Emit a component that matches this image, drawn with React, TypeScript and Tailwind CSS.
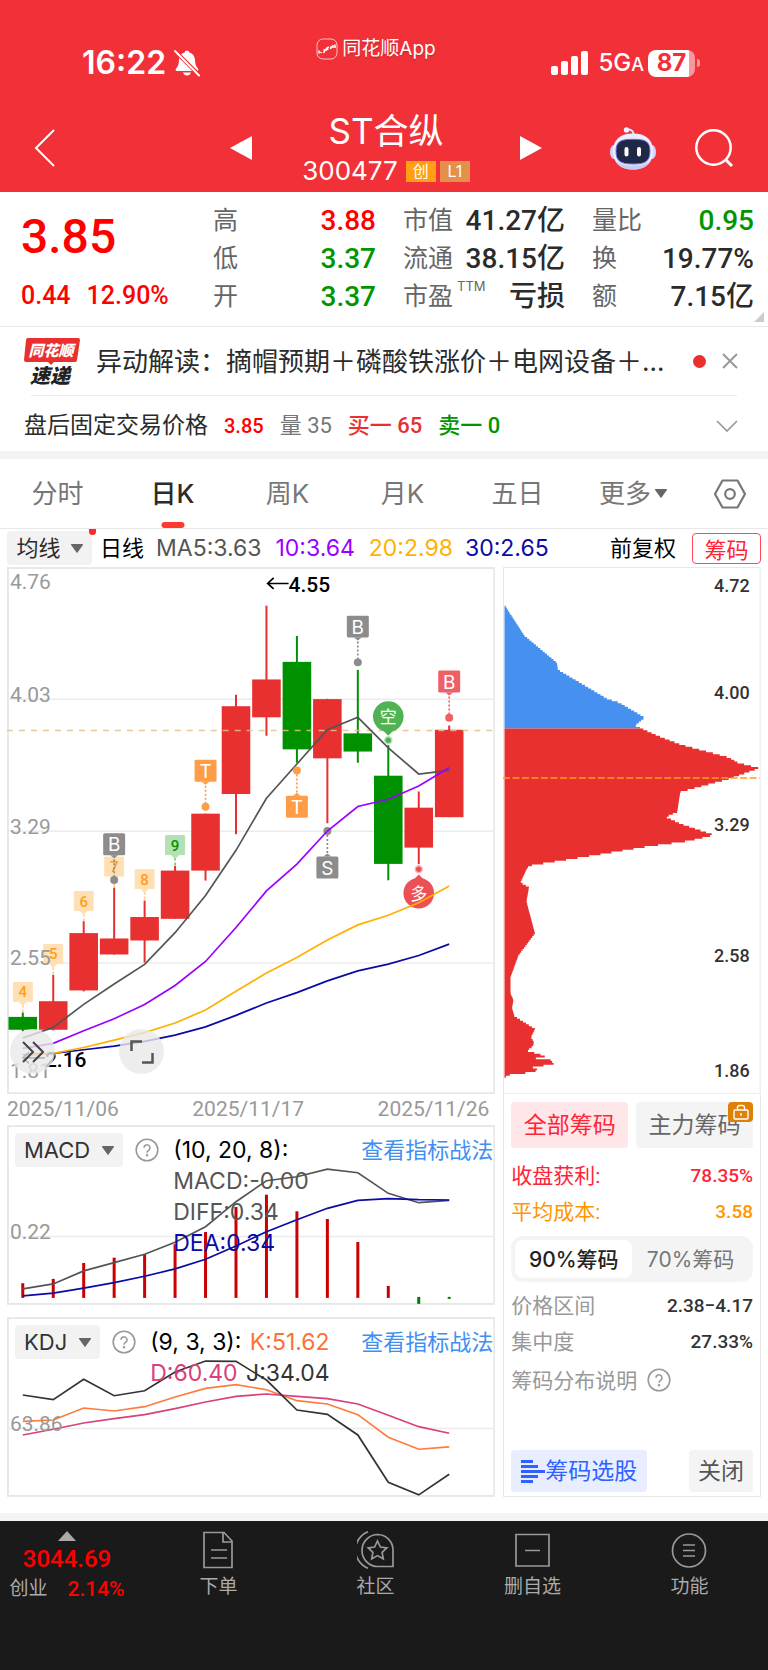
import { useState } from "react";

type Candle = { up: boolean; top: number; bottom: number; high: number; low: number };
type Point = [number, number];

const STEP = 30.5;
const cx = (i: number) => 15.8 + i * STEP;
const toLine = (ys: number[]) => ys.map((y, i) => `${cx(i)},${y}`).join(" ");

const candles: Candle[] = [
  { up: false, top: 450.5, bottom: 463.4, high: 446, low: 465 },
  { up: true, top: 434.8, bottom: 463.4, high: 408.4, low: 464 },
  { up: true, top: 366.6, bottom: 424, high: 354.4, low: 425 },
  { up: true, top: 372, bottom: 388, high: 321, low: 388 },
  { up: true, top: 350.5, bottom: 374, high: 334, low: 396 },
  { up: true, top: 304, bottom: 352.3, high: 299.4, low: 352.3 },
  { up: true, top: 247, bottom: 304, high: 247, low: 314 },
  { up: true, top: 139.4, bottom: 227.3, high: 128, low: 267.6 },
  { up: true, top: 112.6, bottom: 150.5, high: 38.7, low: 169 },
  { up: false, top: 95, bottom: 182.6, high: 69, low: 196 },
  { up: true, top: 132.3, bottom: 191.6, high: 132, low: 256.6 },
  { up: false, top: 166.6, bottom: 184.8, high: 103, low: 196 },
  { up: false, top: 209, bottom: 297.3, high: 178.4, low: 313.7 },
  { up: true, top: 241, bottom: 281, high: 224.8, low: 297.6 },
  { up: true, top: 163, bottom: 250.5, high: 158.7, low: 250.5 },
];

const ma5 = [471.6, 461, 438, 417.6, 398, 366.2, 329, 283.7, 231.6, 197.3, 163, 150.5, 181.2, 207.3, 203.7];
const ma10 = [482, 477, 464.4, 452.3, 438, 419, 395, 361, 324.4, 297.6, 264.4, 239.8, 232.6, 219.4, 201];
const ma20 = [489.4, 487, 481.2, 473.7, 466.2, 456.6, 443.7, 424.8, 406.6, 391, 373.4, 358.4, 348.7, 336.2, 319.4];
const ma30 = [488.4, 487, 483.4, 479.8, 475, 468.7, 460.5, 449, 436.6, 426.2, 414.4, 404.4, 397.6, 389, 377.6];

const diff = [164, 159, 146, 137.7, 129.3, 117.3, 101.7, 76.7, 55.7, 51.7, 44, 47.7, 68.3, 77.7, 75.3];
const dea = [171, 168.3, 163.3, 157.7, 151.3, 144, 134.3, 121, 106.7, 94.7, 83.3, 75.3, 73.7, 74.7, 75];
const macdTops = [158.3, 154, 138, 132.7, 129.3, 119.3, 107, 82, 69.7, 86.3, 94, 117, 161];

const kLine = [104.3, 103, 91, 94, 89.7, 80, 71.3, 67.7, 72.7, 83.7, 87, 97.7, 120.3, 132.3, 130];
const dLine = [118, 112.3, 106, 101.7, 97.7, 91.7, 85, 79.3, 77, 79.3, 81.7, 87, 98.3, 109.7, 116.3];
const jLine = [78, 82.7, 62.3, 78.7, 73.7, 55, 44, 44.3, 63, 93, 97.3, 118, 165.3, 178, 157.3];

const counts = [
  { i: 0, y: 416, n: "4" },
  { i: 1, y: 378, n: "5" },
  { i: 2, y: 325, n: "6" },
  { i: 3, y: 290.5, n: "7" },
  { i: 4, y: 303, n: "8" },
  { i: 5, y: 269, n: "9" },
];

const flags = [
  { i: 3, box: 266.6, dot: 313.4, t: "B", c: "#8c8c8c" },
  { i: 6, box: 193, dot: 240, t: "T", c: "#ff9c47" },
  { i: 9, box: 229, dot: 203.7, t: "T", c: "#ff9c47" },
  { i: 10, box: 290, dot: 264.4, t: "S", c: "#8c8c8c" },
  { i: 11, box: 48.7, dot: 95.5, t: "B", c: "#8c8c8c" },
  { i: 14, box: 103.7, dot: 151, t: "B", c: "#ef6066" },
];

// chip distribution outline: [width, price row]
const trapped: Point[] = [
  [1.5, 37], [21.5, 68], [54, 95], [55, 102], [105, 131.5], [116.5, 135], [142, 150], [132, 158], [140.5, 161.7],
];
const profit: Point[] = [
  [140.5, 161.7], [156, 168.6], [178, 177], [226.5, 190], [235, 195], [256.5, 200.6], [225, 211.7], [177.5, 224.4],
  [174.5, 244.4], [163, 249.5], [179, 256.8], [211.5, 267.4], [187, 273.3], [141.5, 279.5], [96.5, 287], [28, 298],
  [24.5, 300], [17.5, 315], [26, 320], [23.5, 334], [32, 366], [15.5, 388], [7.5, 410], [7.5, 426], [10.5, 433],
  [9, 440.6], [11.5, 449], [32, 461.7], [28, 470], [31, 475], [30, 479], [24, 483.4], [43, 489], [32, 491],
  [47, 492], [51, 497], [29, 500], [34.5, 501.6], [32, 504.7], [7, 507.5], [3, 509.5], [1.5, 512],
];

function steps(points: Point[]) {
  const first = points[0][1];
  const last = points[points.length - 1][1];
  let d = `M1.5 ${first}`;
  for (let y = first; y < last; y += 1.84) {
    const n = Math.max(1, points.findIndex((p) => p[1] > y));
    const [x0, y0] = points[n - 1];
    const [x1, y1] = points[n];
    const x = x0 + ((x1 - x0) * (y - y0)) / (y1 - y0);
    d += `H${x.toFixed(1)}V${Math.min(y + 1.84, last).toFixed(2)}`;
  }
  return d + "H1.5Z";
}

const quotes = [
  { label: "高", value: "3.88", tone: "text-[#ff0000]" },
  { label: "低", value: "3.37", tone: "text-[#009600]" },
  { label: "开", value: "3.37", tone: "text-[#009600]" },
];
const sizes = [
  { label: "市值", value: "41.27亿", tone: "text-[#2b2b2b]" },
  { label: "流通", value: "38.15亿", tone: "text-[#2b2b2b]" },
  { label: "市盈", sup: "TTM", value: "亏损", tone: "text-[#2b2b2b]" },
];
const ratios = [
  { label: "量比", value: "0.95", tone: "text-[#009600]" },
  { label: "换", value: "19.77%", tone: "text-[#2b2b2b]" },
  { label: "额", value: "7.15亿", tone: "text-[#2b2b2b]" },
];

const DIN = "font-['Roboto','Noto_Sans_CJK_SC',sans-serif]";

function Quotes({ items }: { items: { label: string; value: string; tone: string; sup?: string }[] }) {
  return (
    <dl className="flex flex-col">
      {items.map((q) => (
        <div key={q.label} className="flex h-[38px] items-center justify-between">
          <dt className="relative text-[25px] text-[#666]">
            {q.label}
            {q.sup ? <span className="absolute left-full top-0 ml-1 text-[13px] leading-4">{q.sup}</span> : null}
          </dt>
          <dd className={`${DIN} text-[28px] font-medium ${q.tone}`}>{q.value}</dd>
        </div>
      ))}
    </dl>
  );
}

function Caret({ className }: { className: string }) {
  return (
    <svg viewBox="0 0 12 9" className={className} fill="currentColor" aria-hidden="true">
      <path d="M.6 0h10.8a.6.6 0 0 1 .5 1L6.500 8.600a.6.6 0 0 1-1 0L.1 1A.6.6 0 0 1 .6 0z" />
    </svg>
  );
}

function Help() {
  return (
    <svg viewBox="0 0 24 24" className="size-6 shrink-0" fill="none" stroke="#999" strokeWidth="1.600" aria-hidden="true">
      <circle cx="12" cy="12" r="10.800" />
      <path d="M9 9.800a3 3 0 1 1 4.800 2.400c-1.200.8-1.800 1.300-1.800 2.600" />
      <circle cx="12" cy="17.300" r=".5" fill="#999" />
    </svg>
  );
}

function StatusBar() {
  return (
    <div className="grid h-24 grid-cols-3">
      <div className="flex items-center pl-[82px] pt-[30px]">
        <span className="text-[32px] font-semibold">16:22</span>
        <svg viewBox="0 0 26 28" className="ml-2 h-7 w-[26px]" aria-hidden="true">
          <path
            d="M13 1.500c1.300 0 2.200.8 2.400 1.900 3.600 1 5.400 3.900 5.600 7.700.2 4 .8 6.200 3 8.600.8 1 .3 2.300-1.100 2.300H3.100c-1.400 0-1.900-1.300-1.100-2.300 2.200-2.400 2.800-4.600 3-8.600.2-3.800 2-6.700 5.600-7.700.2-1.100 1.100-1.900 2.400-1.900zM9 23.500h8c-.5 2-2 3-4 3s-3.500-1-4-3z"
            fill="white"
          />
          <path d="M0 1l25 25" stroke="#f13038" strokeWidth="4" />
          <path d="M1 2l24 24.500" stroke="white" strokeWidth="2" strokeLinecap="round" />
        </svg>
      </div>
      <div className="flex items-center justify-center gap-1 pr-4 pt-0.5 text-[19px] text-shadow-sm">
        <svg viewBox="0 0 22 22" className="size-[22px]" fill="none" stroke="white" aria-hidden="true">
          <rect x="1" y="1" width="20" height="20" rx="6" strokeOpacity=".7" />
          <path d="M3 15.500v-3M4.500 15l1-1M7 14.500c2 0 2-3 .5-3M10 13v-2.500M12 12l-1-2 2-1M14.500 11l1-3M17 10V7M19 10V6.500" strokeWidth="1.600" />
        </svg>
        <span>同花顺App</span>
      </div>
      <div className="flex items-center justify-end pr-[68px] pt-[30px]">
        <svg viewBox="0 0 37 24" className="h-6 w-[37px]" fill="white" aria-hidden="true">
          <rect x="0" y="15" width="7" height="9" rx="2" />
          <rect x="10" y="10" width="7" height="14" rx="2" />
          <rect x="20" y="5" width="7" height="19" rx="2" />
          <rect x="30" y="0" width="7" height="24" rx="2" />
        </svg>
        <span className="ml-2.5 text-2xl font-medium">
          5G<span className="text-lg">A</span>
        </span>
        <span className="ml-1 flex h-[27px] w-[47px] items-center justify-center rounded-lg bg-linear-to-r from-white from-88% to-white/50 to-88% text-2xl font-bold text-[#f13038]">
          87
        </span>
        <span className="ml-0.5 h-2 w-[3px] rounded-r-full bg-white/50" />
      </div>
    </div>
  );
}

function TitleBar() {
  return (
    <div className="grid h-24 grid-cols-[200px_1fr_200px] items-center pt-2">
      <button aria-label="返回" className="ml-8 w-8">
        <svg viewBox="0 0 24 40" className="h-10 w-6" fill="none" stroke="white" strokeWidth="2">
          <path d="M22 2L4 20l18 18" />
        </svg>
      </button>
      <div className="flex items-center justify-between pl-7 pr-6">
        <button aria-label="上一只">
          <svg viewBox="0 0 24 24" className="size-6" fill="white">
            <path d="M24 0v24L2 12z" />
          </svg>
        </button>
        <div className="flex flex-col items-center">
          <h1 className="text-[35px] leading-11">ST合纵</h1>
          <div className="mt-0.5 flex items-center gap-1">
            <span className="mr-1 text-[26px] leading-8">300477</span>
            <span className="flex h-[21px] w-[30px] items-center justify-center bg-[#ff9f14] text-base">创</span>
            <span className="flex h-[21px] w-[30px] items-center justify-center bg-[#e4904a] text-base">L1</span>
          </div>
        </div>
        <button aria-label="下一只">
          <svg viewBox="0 0 24 24" className="size-6" fill="white">
            <path d="M0 0v24l22-12z" />
          </svg>
        </button>
      </div>
      <div className="flex items-center justify-between pl-[42px] pr-[34px]">
        <button aria-label="智能助手">
          <svg viewBox="0 0 46 43" className="h-[43px] w-[46px]">
            <path d="M23.500 8c.3-4-2-5.500-6.500-5.500" stroke="#e4e6fb" strokeWidth="2" fill="none" />
            <circle cx="16.500" cy="3" r="2.700" fill="#eef0ff" />
            <ellipse cx="4" cy="25" rx="4" ry="7" fill="#d3d6f8" />
            <ellipse cx="42" cy="25" rx="4" ry="7" fill="#d3d6f8" />
            <path d="M23 6.500c12.500 0 20 6 20 17.500 0 12-7.500 18.500-20 18.500S3 36 3 24C3 12.500 10.500 6.500 23 6.500z" fill="#eceefe" />
            <path d="M5 33c3.500 7 9 9.500 18 9.500S37.500 40 41 33c-5 4.500-10 5.500-18 5.500S10 37.500 5 33z" fill="#c9cdf4" />
            <path
              d="M23 12.300c12 0 17 1.700 17 12S35 37 23 37 6 34.500 6 24.300s5-12 17-12z"
              fill="#1f2846"
              stroke="#7468e6"
              strokeWidth="1"
            />
            <rect x="14.500" y="20" width="4" height="9.500" rx="2" fill="white" />
            <rect x="27" y="20" width="4" height="9.500" rx="2" fill="white" />
          </svg>
        </button>
        <button aria-label="搜索">
          <svg viewBox="0 0 40 40" className="size-10" fill="none" stroke="white" strokeWidth="2.500">
            <circle cx="19.500" cy="19.500" r="17.200" />
            <path d="M31.500 31.500l6.500 6.500" strokeWidth="3" />
          </svg>
        </button>
      </div>
    </div>
  );
}

function PriceChart() {
  return (
    <svg viewBox="0 0 489 528" className="block w-full font-['Roboto','Noto_Sans_CJK_SC',sans-serif]" role="img" aria-label="日K线图">
      <rect x="1" y="1" width="487" height="526" fill="white" stroke="#e8e8e8" strokeWidth="2" />
      {[132.5, 264.5, 396.5].map((y) => (
        <path key={y} d={`M1 ${y}H488`} stroke="#ececec" strokeWidth="1.500" />
      ))}
      {candles.map((c, i) => (
        <g key={i} fill={c.up ? "#e83030" : "#009100"}>
          <rect x={cx(i) - 1} y={c.high} width="2" height={c.low - c.high} />
          <rect x={cx(i) - 14.3} y={c.top} width="28.600" height={c.bottom - c.top} />
        </g>
      ))}
      <path d="M0 163.700H488" stroke="#e0c08c" strokeOpacity=".85" strokeWidth="1.500" strokeDasharray="6 6" />
      {counts.map(({ i, y, n }) => (
        <g key={n}>
          <path d={`M${cx(i)} ${y + 22}v8`} stroke={n === "9" ? "#5fbf62" : "#ffc880"} strokeWidth="1.500" strokeDasharray="3 2" />
          <path
            d={`M${cx(i) - 9.5} ${y}h19v19h-5.500l-4 4-4-4h-5.500z`}
            fill={n === "9" ? "#b3e0b4" : "#ffe0b5"}
            stroke={n === "9" ? "#b3e0b4" : "#ffe0b5"}
            strokeLinejoin="round"
          />
          <text x={cx(i)} y={y + 15} textAnchor="middle" fontSize="15" fontWeight="500" fill={n === "9" ? "#009600" : "#ff9c1a"}>
            {n}
          </text>
        </g>
      ))}
      <g fill="none" strokeWidth="1.700">
        <polyline points={toLine(ma30)} stroke="#0a0aa5" />
        <polyline points={toLine(ma5)} stroke="#555" />
      </g>
      {flags.map(({ i, box, dot, t, c }) => (
        <g key={`${i}${t}`} fill={c}>
          <path d={`M${cx(i)} ${Math.min(box + 22, dot)}V${Math.max(box, dot)}`} stroke={c} strokeWidth="1.700" strokeDasharray="2 2" />
          <rect x={cx(i) - 11} y={box} width="22" height="22" rx="1.500" />
          <path d={dot > box ? `M${cx(i) - 4} ${box + 22}h8l-4 3z` : `M${cx(i) - 4} ${box}h8l-4-3z`} />
          <circle cx={cx(i)} cy={dot} r="4" />
          <text x={cx(i)} y={box + 18} textAnchor="middle" fontSize="19" fill="white" className="font-['Inter',sans-serif]">
            {t}
          </text>
        </g>
      ))}
      <g fill="#4fb353">
        <circle cx={cx(12)} cy="149.800" r="15.300" />
        <path d={`M${cx(12) - 7} 162h14l-7 7z`} />
        <circle cx={cx(12)} cy="173.400" r="3.500" stroke="#b9e2ba" strokeWidth="1.500" />
        <text x={cx(12)} y="156" textAnchor="middle" fontSize="17" fill="white">空</text>
      </g>
      <g fill="#ec5055">
        <circle cx={cx(13)} cy="326.600" r="15.300" />
        <path d={`M${cx(13) - 7} 315h14l-7-7z`} />
        <circle cx={cx(13)} cy="302.600" r="3.500" stroke="#f8bcbe" strokeWidth="1.500" />
        <text x={cx(13)} y="333" textAnchor="middle" fontSize="17" fill="white">多</text>
      </g>
      <g fill="none" strokeWidth="1.700">
        <polyline points={toLine(ma10)} stroke="#9a00ff" />
        <polyline points={toLine(ma20)} stroke="#ffb000" />
      </g>
      <g fontSize="21" fill="#999">
        <text x="3" y="22">4.76</text>
        <text x="3" y="135">4.03</text>
        <text x="3" y="267">3.29</text>
        <text x="3" y="399">2.55</text>
        <text x="3" y="512">1.81</text>
      </g>
      <g stroke="black" strokeWidth="1.700" fill="none">
        <path d="M282 16.500H261M267 11l-6 5.500 6 5.500" />
        <path d="M38 491.500H16M22 486l-6 5.500 6 5.500" />
      </g>
      <g fontSize="21" fontWeight="500">
        <text x="282" y="25">4.55</text>
        <text x="38" y="501">2.16</text>
      </g>
    </svg>
  );
}

function ChipChart() {
  const labels: [string, number][] = [["4.72", 25], ["4.00", 132], ["3.29", 264], ["2.58", 396], ["1.86", 511]];
  return (
    <svg viewBox="0 0 258 528" className="block w-full font-['Roboto',sans-serif]" role="img" aria-label="筹码分布">
      <rect x=".5" y=".5" width="257" height="527" fill="white" stroke="#e8e8e8" />
      <path d={steps(trapped)} fill="#4690ef" />
      <path d={steps(profit)} fill="#e83030" />
      <path d="M0 211.300H257" stroke="#ff9c1a" strokeWidth="1.700" strokeDasharray="7 2.500" />
      {labels.map(([t, y]) => (
        <text key={t} x="247" y={y} textAnchor="end" fontSize="18" fontWeight="500" fill="#333">
          {t}
        </text>
      ))}
    </svg>
  );
}

function IndicatorHead({ name, params }: { name: string; params: React.ReactNode }) {
  return (
    <div className="relative flex items-start gap-3 p-2 pr-1">
      <button className="flex h-[34px] items-center gap-3 rounded bg-[#f2f2f2] px-[9px] text-[22px] text-[#333]">
        {name}
        <Caret className="h-[9px] w-3 text-[#666]" />
      </button>
      <button aria-label="指标说明" className="flex h-[34px] items-center">
        <Help />
      </button>
      <div className="flex-1 whitespace-nowrap pl-0.5 pt-0.5 text-[23px] leading-[31px] text-black">{params}</div>
      <a href="#tactics" className="absolute right-0.5 top-2.5 text-[22px] leading-[31px] text-[#3f8ff0]">
        查看指标战法
      </a>
    </div>
  );
}

function MacdPanel() {
  return (
    <section className="relative h-[180px]">
      <svg viewBox="0 0 489 180" className="absolute inset-0 size-full font-['Roboto',sans-serif]" role="img" aria-label="MACD">
        <rect x="1" y="1" width="487" height="178" fill="white" stroke="#e8e8e8" strokeWidth="2" />
        <path d="M1 111.500H488" stroke="#ececec" strokeWidth="1.500" />
        {macdTops.map((y, i) => (
          <rect key={i} x={cx(i) - 1.5} y={y} width="3" height={173 - y} fill="#cc0000" />
        ))}
        <rect x={cx(13) - 1.5} y="172" width="3" height="7" fill="#007f00" />
        <rect x={cx(14) - 1.5} y="172" width="3" height="2" fill="#007f00" />
        <text x="3" y="114" fontSize="21" fill="#999">0.22</text>
        <polyline points={toLine(diff)} fill="none" stroke="#555" strokeWidth="1.700" />
        <polyline points={toLine(dea)} fill="none" stroke="#0a0aa5" strokeWidth="1.700" />
      </svg>
      <IndicatorHead
        name="MACD"
        params={
          <>
            <p>(10, 20, 8):</p>
            <p className="text-[#555]">MACD:-0.00</p>
            <p className="text-[#555]">DIFF:0.34</p>
            <p className="text-[#0a0aa5]">DEA:0.34</p>
          </>
        }
      />
    </section>
  );
}

function KdjPanel() {
  return (
    <section className="relative h-[180px]">
      <svg viewBox="0 0 489 180" className="absolute inset-0 size-full font-['Roboto',sans-serif]" role="img" aria-label="KDJ">
        <rect x="1" y="1" width="487" height="178" fill="white" stroke="#e8e8e8" strokeWidth="2" />
        <path d="M1 111.500H488" stroke="#ececec" strokeWidth="1.500" />
        <g fill="none" strokeWidth="1.700">
          <polyline points={toLine(kLine)} stroke="#ff7a3d" />
          <polyline points={toLine(dLine)} stroke="#d9407c" />
          <polyline points={toLine(jLine)} stroke="#333" />
        </g>
        <text x="3" y="114" fontSize="21" fill="#999">63.86</text>
      </svg>
      <IndicatorHead
        name="KDJ"
        params={
          <>
            <p>
              (9, 3, 3): <span className="ml-0.5 text-[#ff7035]">K:51.62</span>
            </p>
            <p>
              <span className="text-[#d9407c]">D:60.40</span> <span className="ml-0.5 text-[#333]">J:34.04</span>
            </p>
          </>
        }
      />
    </section>
  );
}

function ChipPanel() {
  const [range, setRange] = useState("90");
  return (
    <section className="flex flex-1 flex-col border border-t-0 border-[#e8e8e8] px-[7px] pb-1 pt-2">
      <div className="grid grid-cols-2 gap-2 text-[23px]">
        <button className="h-[46px] rounded bg-[#ffe6e9] text-[#ff2436]">全部筹码</button>
        <button className="relative h-[46px] rounded bg-[#f4f4f4] text-[#666]">
          主力筹码
          <span className="absolute right-0 top-0 flex h-5 w-[25px] items-center justify-center rounded-sm bg-[#dd8109]">
            <svg viewBox="0 0 16 16" className="size-4" fill="none" stroke="white" strokeWidth="1.400">
              <rect x="1" y="6" width="14" height="9" rx="1" />
              <path d="M4.500 6V3.500a2 2 0 0 1 2-2h3a2 2 0 0 1 2 2V6M8 9v3" />
            </svg>
          </span>
        </button>
      </div>
      <dl className={`${DIN} mt-2.5 text-[21px] leading-9`}>
        <div className="flex justify-between text-[#ff2436]">
          <dt>收盘获利:</dt>
          <dd className="text-[19px] font-medium">78.35%</dd>
        </div>
        <div className="flex justify-between text-[#ff9500]">
          <dt>平均成本:</dt>
          <dd className="text-[19px] font-medium">3.58</dd>
        </div>
      </dl>
      <div className="mt-1.5 grid h-[46px] grid-cols-2 rounded-xl bg-[#f4f4f4] p-1 text-[21px]">
        <button
          onClick={() => setRange("90")}
          className={range === "90" ? "rounded-lg bg-white font-medium text-[#222]" : "text-[#777]"}
        >
          90%筹码
        </button>
        <button
          onClick={() => setRange("70")}
          className={range === "70" ? "rounded-lg bg-white font-medium text-[#222]" : "text-[#777]"}
        >
          70%筹码
        </button>
      </div>
      <dl className={`${DIN} mt-1.5 text-[21px] leading-9 text-[#999]`}>
        <div className="flex justify-between">
          <dt>价格区间</dt>
          <dd className="text-[19px] font-medium text-[#333]">2.38−4.17</dd>
        </div>
        <div className="flex justify-between">
          <dt>集中度</dt>
          <dd className="text-[19px] font-medium text-[#333]">27.33%</dd>
        </div>
      </dl>
      <a href="#about" className="flex h-10 items-center gap-2.5 text-[21px] text-[#999]">
        筹码分布说明
        <Help />
      </a>
      <div className="mt-auto flex justify-between text-[23px]">
        <button className="flex h-[42px] items-center rounded bg-[#e8eeff] px-2.5 text-[#2f62ff]">
          <svg viewBox="0 0 24 24" className="size-6" fill="currentColor" aria-hidden="true">
            <path d="M0 1h12v3H0zM0 6h17v3H0zM0 11h24v3H0zM0 16h17v3H0zM0 21h12v3H0z" />
          </svg>
          筹码选股
        </button>
        <button className="h-[42px] rounded bg-[#f4f4f4] px-[9px] text-[#555]">关闭</button>
      </div>
    </section>
  );
}

const tabs = ["分时", "日K", "周K", "月K", "五日"];

const navItems = [
  {
    label: "下单",
    icon: <path d="M4 1.500h20l8 8.500v26.500H4zM23 1.500V11h9M11 19h16M11 27h16" />,
  },
  {
    label: "社区",
    icon: (
      <>
        <path d="M21 3.500a16 16 0 0 0 0 32h15v-17a15.500 15.500 0 0 0-15-15z" />
        <path d="M11 .8a19.500 19.500 0 0 0 0 36.400" />
        <path d="M20.500 10l2.900 6 6.400.8-4.700 4.500 1.200 6.500-5.800-3.200-5.800 3.200 1.200-6.500-4.700-4.500 6.400-.8z" />
      </>
    ),
  },
  { label: "删自选", icon: <path d="M2 3.500h33v31.500H2zM11 19.500h15" /> },
  {
    label: "功能",
    icon: (
      <>
        <circle cx="18" cy="19.500" r="16.500" />
        <path d="M12 14h12M12 19.500h12M12 25h12" />
      </>
    ),
  },
];

export default function App() {
  const [tab, setTab] = useState("日K");

  return (
    <div className="min-h-screen bg-white font-['Inter','Noto_Sans_CJK_SC',sans-serif] text-[#2b2b2b]">
      <header className="bg-[#f13038] text-white">
        <StatusBar />
        <TitleBar />
      </header>

      <section className="relative grid grid-cols-[165fr_163fr_162fr_162fr] gap-[27px] border-b border-[#e8e8e8] py-2.5 pl-[21px] pr-[14px]">
        <div className={`${DIN} whitespace-nowrap font-medium text-[#ff0000]`}>
          <p className="pt-2 text-[48px] leading-[54px]">3.85</p>
          <p className="mt-4 flex gap-4 text-[25px] leading-8">
            <span>0.44</span>
            <span>12.90%</span>
          </p>
        </div>
        <Quotes items={quotes} />
        <Quotes items={sizes} />
        <Quotes items={ratios} />
        <span className="absolute bottom-1 right-1 size-2.5 bg-[#ccc] [clip-path:polygon(100%_0,100%_100%,0_100%)]" />
      </section>

      <section className="flex h-[68px] items-center pl-6 pr-[30px]">
        <svg
          viewBox="0 0 56 48"
          className="h-12 w-14 shrink-0 overflow-visible font-['Noto_Sans_CJK_SC',sans-serif]"
          fontWeight="900"
          fontStyle="italic"
        >
          <path d="M4 1h50a2 2 0 0 1 2 2l-3 20a2 2 0 0 1-2 2H30l-3 3-3-3H2a2 2 0 0 1-2-2L2 3a2 2 0 0 1 2-2z" fill="#e83030" />
          <text x="27" y="19" textAnchor="middle" fontSize="15" fill="white">同花顺</text>
          <text x="26" y="46" textAnchor="middle" fontSize="20" fill="#222">速递</text>
        </svg>
        <p className="ml-4 flex-1 truncate text-[26px]">异动解读：摘帽预期＋磷酸铁涨价＋电网设备＋…</p>
        <span className="size-[13px] rounded-full bg-[#e83030]" />
        <button aria-label="关闭" className="ml-4">
          <svg viewBox="0 0 16 16" className="size-4" stroke="#999" strokeWidth="2">
            <path d="M1 1l14 14M15 1L1 15" />
          </svg>
        </button>
      </section>

      <hr className="ml-[31px] mr-[31px] border-[#ececec]" />
      <section className="mx-6 flex h-[55px] items-center gap-4 pt-1 text-[22px]">
        <span className="text-[23px]">盘后固定交易价格</span>
        <span className={`${DIN} text-xl font-medium text-[#ff0000]`}>3.85</span>
        <span className={`${DIN} text-[#777]`}>量 35</span>
        <span className={`${DIN} font-medium text-[#e83030]`}>买一 65</span>
        <span className={`${DIN} font-medium text-[#009600]`}>卖一 0</span>
        <button aria-label="展开" className="ml-auto mr-1.5">
          <svg viewBox="0 0 22 12" className="h-3 w-[22px]" fill="none" stroke="#999" strokeWidth="1.700">
            <path d="M1 1l10 10L21 1" />
          </svg>
        </button>
      </section>

      <nav className="flex h-[78px] items-stretch border-b border-t-8 border-b-[#e8e8e8] border-t-[#f4f4f4] text-[26px] text-[#777]">
        {tabs.map((t) => (
          <button
            key={t}
            onClick={() => setTab(t)}
            className={`relative flex-[115] ${tab === t ? "font-medium text-[#2b2b2b]" : ""}`}
          >
            {t}
            {tab === t ? <span className="absolute bottom-0 left-1/2 h-1.5 w-[23px] -translate-x-1/2 rounded-sm bg-[#ff3b30]" /> : null}
          </button>
        ))}
        <button className="flex flex-[116] items-center justify-center gap-1">
          更多
          <Caret className="h-[9px] w-3 text-[#666]" />
        </button>
        <button aria-label="设置" className="flex flex-[77] items-center justify-center">
          <svg viewBox="0 0 32 30" className="h-[30px] w-8" fill="none" stroke="#777" strokeWidth="2.200">
            <path d="M8.500 1.500h15L31 15l-7.500 13.500h-15L1 15z" strokeLinejoin="round" />
            <circle cx="16" cy="15" r="4.800" />
          </svg>
        </button>
      </nav>

      <main className="px-[7px]">
        <div className="flex h-[38px] items-center whitespace-nowrap text-[22px]">
          <button className="relative flex h-[34px] w-[85px] shrink-0 items-center justify-center gap-2.5 rounded bg-[#f2f2f2]">
            均线
            <Caret className="h-[9px] w-3 text-[#666]" />
            <span className="absolute -right-1 -top-0.5 h-1.5 w-[7px] rounded-b-full bg-[#ff2436]" />
          </button>
          <span className="ml-2 text-black">日线</span>
          <span className="ml-3 text-[23px] text-[#555]">MA5:3.63</span>
          <span className="ml-3.5 text-[23px] text-[#9a00ff]">10:3.64</span>
          <span className="ml-3.5 text-[23px] text-[#ffb000]">20:2.98</span>
          <span className="ml-3 text-[23px] text-[#0a0aa5]">30:2.65</span>
          <button className="ml-auto text-black">前复权</button>
          <button className="ml-4 h-[31px] w-[69px] rounded border border-[#ff4a58] text-[#ff2436]">筹码</button>
        </div>

        <div className="grid grid-cols-[489fr_258fr] gap-2">
          <div>
            <div className="relative">
              <PriceChart />
              <button
                aria-label="快进"
                className="absolute bottom-5 left-[3px] flex size-[45px] items-center justify-center rounded-full bg-[#e8e8e8]/80"
              >
                <svg viewBox="0 0 22 22" className="size-[22px]" fill="none" stroke="#444" strokeWidth="2">
                  <path d="M1 1l10 10L1 21M11 1l10 10-10 10" />
                </svg>
              </button>
              <button
                aria-label="全屏"
                className="absolute bottom-5 left-28 flex size-[45px] items-center justify-center rounded-full bg-[#e8e8e8]/80"
              >
                <svg viewBox="0 0 24 24" className="size-6" fill="none" stroke="#555" strokeWidth="2.500">
                  <path d="M1.500 11V1.500H12M22.500 13v9.500H12" />
                </svg>
              </button>
            </div>
            <div className={`${DIN} flex h-[31px] items-center justify-between pr-1.5 text-[21px] text-[#999]`}>
              <time>2025/11/06</time>
              <time>2025/11/17</time>
              <time>2025/11/26</time>
            </div>
            <div className="flex flex-col gap-3">
              <MacdPanel />
              <KdjPanel />
            </div>
          </div>
          <div className="flex flex-col">
            <ChipChart />
            <ChipPanel />
          </div>
        </div>
      </main>

      <footer className="mt-4 border-t-8 border-[#f4f4f4]">
        <nav className="flex h-[149px] bg-[#1a1a1a] pt-2 text-[#aaa]">
          <a href="#index" className={`${DIN} flex w-[140px] flex-col items-center pr-1.5`}>
            <svg viewBox="0 0 18 10" className="mt-0.5 h-2.5 w-[18px]" fill="#aaa" aria-hidden="true">
              <path d="M9 0l9 10H0z" />
            </svg>
            <span className="mt-0.5 text-2xl font-medium leading-8 text-[#ff0000]">3044.69</span>
            <span className="flex items-center gap-5 text-[19px] leading-7">
              创业
              <span className="text-[21px] font-medium text-[#ff0000]">2.14%</span>
            </span>
          </a>
          {navItems.map((item) => (
            <a key={item.label} href="#nav" className="flex flex-1 flex-col items-center gap-0.5 pt-0.5">
              <svg viewBox="0 0 38 38" className="size-[38px]" fill="none" stroke="#999" strokeWidth="1.700" aria-hidden="true">
                {item.icon}
              </svg>
              <span className="text-[19px] leading-8">{item.label}</span>
            </a>
          ))}
        </nav>
      </footer>
    </div>
  );
}
